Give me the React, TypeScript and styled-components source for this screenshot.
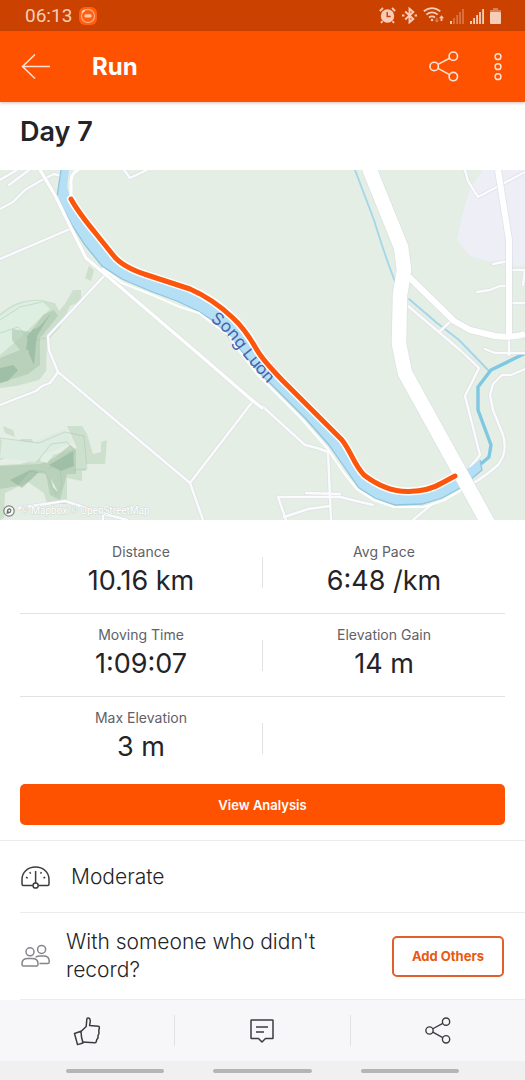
import React from "react";
import styled, { createGlobalStyle } from "styled-components";

const GlobalStyle = createGlobalStyle`
  * { box-sizing: border-box; }
  body { margin: 0; background: #fff; }
  button { font: inherit; color: inherit; background: none; border: 0; padding: 0; cursor: pointer; }
  svg { display: block; flex: none; }
  h1, h2, p, dl, dd { margin: 0; }
`;

const Page = styled.div`
  min-height: 100vh;
  display: flex;
  flex-direction: column;
  background: #fff;
  color: #242428;
  font-family: Inter, "Noto Sans", sans-serif;
`;

const StatusBar = styled.div`
  height: 31px;
  padding: 0 24px 0 25px;
  display: flex;
  align-items: center;
  gap: 7px;
  background: #cb4200;
  color: #f6cdb9;
`;

const Clock = styled.time`
  font: 400 19px/22px Roboto, sans-serif;
`;

const StatusIcons = styled.div`
  margin-left: auto;
  display: flex;
  align-items: center;
  gap: 6px;
`;

const Header = styled.header`
  position: relative;
  height: 71px;
  padding: 0 20px;
  display: flex;
  align-items: center;
  background: #fe5200;
  color: #ffe3d6;
  box-shadow: 0 1px 3px rgba(120, 60, 30, 0.35);
`;

const HeaderTitle = styled.h1`
  flex: 1;
  margin-left: 40px;
  color: #fff;
  font-size: 24px;
  line-height: 30px;
  font-weight: 700;
`;

const IconButton = styled.button<{ $width: number }>`
  display: flex;
  align-items: center;
  justify-content: center;
  width: ${(p) => p.$width}px;
  height: 40px;
`;

const HeaderActions = styled.div`
  display: flex;
  gap: 31px;
`;

const ActivityTitle = styled.h2`
  height: 68px;
  padding: 14px 20px;
  font-size: 27px;
  line-height: 32px;
  font-weight: 600;
`;

const MapImage = styled.svg`
  width: 100%;
  height: 350px;
  background: #e4eee4;
`;

const Stats = styled.section`
  padding: 11px 20px 0;
`;

const StatRow = styled.dl`
  display: grid;
  grid-template-columns: 1fr 1px 1fr;
  align-items: center;
  border-bottom: 1px solid #e2e2e4;
  &:last-child { border-bottom: 0; }
`;

const Stat = styled.div`
  padding: 12px 0 16px;
  display: flex;
  flex-direction: column;
  align-items: center;
  gap: 4px;
`;

const StatLabel = styled.dt`
  color: #616167;
  font-size: 14px;
  line-height: 18px;
`;

const StatValue = styled.dd`
  font-size: 27px;
  line-height: 32px;
  font-weight: 400;
`;

const Separator = styled.span`
  width: 1px;
  height: 31px;
  background: #e2e2e5;
`;

const Analysis = styled.div`
  padding: 5px 20px 15px;
  border-bottom: 1px solid #ebebed;
`;

const PrimaryButton = styled.button`
  width: 100%;
  height: 41px;
  border-radius: 5px;
  background: #fe5200;
  color: #fff;
  font-size: 13px;
  font-weight: 600;
`;

const DetailRow = styled.div<{ $height: number; $gap: number }>`
  margin-left: 20px;
  padding-right: 21px;
  min-height: ${(p) => p.$height}px;
  display: flex;
  align-items: center;
  gap: ${(p) => p.$gap}px;
  border-bottom: 1px solid #ebebed;
`;

const DetailText = styled.p`
  flex: 1;
  font-size: 21px;
  line-height: 28px;
  font-weight: 300;
  color: #242428;
`;

const OutlineButton = styled.button`
  width: 112px;
  height: 41px;
  border: 2px solid #e0602c;
  border-radius: 5px;
  color: #e8590f;
  font-size: 13px;
  font-weight: 700;
`;

const TabBar = styled.nav`
  margin-top: auto;
  height: 61px;
  display: grid;
  grid-template-columns: 1fr 1px 1fr 1px 1fr;
  align-items: center;
  justify-items: center;
  background: #f7f7fa;
  color: #3c3c40;
`;

const SystemNav = styled.div`
  height: 19px;
  padding: 0 66px;
  display: flex;
  align-items: center;
  gap: 49px;
  background: #f0f0f0;
`;

const NavHandle = styled.span`
  flex: 1;
  height: 4px;
  border-radius: 2px;
  background: #b5b5b5;
`;

function ShareIcon({ width, height }: { width: number; height: number }) {
  return (
    <svg width={width} height={height} viewBox="0 0 30 32" fill="none" stroke="currentColor" strokeWidth="1.6">
      <circle cx="5.2" cy="15.4" r="4.2" />
      <circle cx="24.3" cy="5.2" r="4.2" />
      <circle cx="24.3" cy="25.6" r="4.2" />
      <path d="M9 13.4 20.5 7.2M9 17.4l11.5 6.2" />
    </svg>
  );
}

function StatusGlyphs() {
  return (
    <StatusIcons>
      <svg width="17" height="17" viewBox="0 0 17 17" fill="currentColor">
        <circle cx="8.5" cy="9" r="6.7" />
        <path d="M.8 4 4 1M16.2 4 13 1M3.5 14.2 2 16M13.5 14.2 15 16" fill="none" stroke="currentColor" strokeWidth="1.8" />
        <path d="M8.2 5v4.5h3.5" fill="none" stroke="#cb4200" strokeWidth="1.4" />
      </svg>
      <svg width="15" height="17" viewBox="0 0 15 17" fill="none" stroke="currentColor" strokeWidth="1.9">
        <path d="M3.2 4.5 11.3 12 7.5 15.3V1.7L11.3 5 3.2 12.5" />
        <path d="M0 8.5h2.4M12.6 8.5H15" />
      </svg>
      <svg width="21" height="17" viewBox="0 0 21 17" fill="none" stroke="currentColor" strokeWidth="1.8">
        <path d="M.8 4.3Q9 -2 17.3 4.3M3.4 7.6Q9 3.2 14.7 7.6M6 10.5Q9 8.3 12 10.5" />
        <circle cx="9" cy="13" r="1.2" fill="currentColor" stroke="none" />
        <path d="M18.5 8.2 21 11.3h-1.6V14h-1.8v-2.7H16z" fill="currentColor" stroke="none" />
        <path d="M13.8 15.8 11.5 13H13v-2h1.6v2H16z" fill="currentColor" stroke="none" opacity=".4" />
      </svg>
      <svg width="14" height="16" viewBox="0 0 14 16" fill="currentColor">
        <path d="M0 13h2v3H0z" />
        <path d="M3.2 10h1.7v6H3.2zM6.3 7H8v9H6.3zM9.2 4h1.7v12H9.2zM12.2 1h1.7v15h-1.7z" opacity=".38" />
      </svg>
      <svg width="14" height="16" viewBox="0 0 14 16" fill="currentColor">
        <path d="M0 13h2v3H0zM3.2 10h1.8v6H3.2zM6.2 7H8v9H6.2zM9.1 4h1.8v12H9.1zM12.2 1H14v15h-1.8z" />
      </svg>
      <svg width="11" height="16" viewBox="0 0 11 16" fill="currentColor">
        <path d="M3 0h5v2h3v2H0V2h3z" opacity=".45" />
        <rect y="4" width="11" height="12" rx="1" />
      </svg>
    </StatusIcons>
  );
}

const roads =
  "M0 39 13 32 25 20 40 11 54 4 62 6M0 10 17 0M9 15 29 0M71 29V14Q70 4 78 0M124 0 130 8 147 0M0 89 70 59M105 105 48 166 49 180 58 202 50 213 42 216 36 221 0 235M58 202 190 313 203 350M253 231 190 313M262 236 305 275 317 278 328 282 331 350M278 327H340L373 335M278 327 286 350M306 323 340 324M284 347 308 339 330 336M413 350 431 335M19 338 65 331 105 344 127 350M103 343V350M465 0 468 11 478 27 525 2M493 94 508 91M510 100H525L523 115M477 122 490 120 500 116H508M511 133H525M452 150 439 162M408 136 460 180 479 198 465 226 480 285 470 297M485 179 495 183 525 183M509 165V185M525 199 511 205 502 205 493 214 490 225 493 240 503 265Q508 283 498 295 480 311 462 319";
const riverBank =
  "M61 0 57 27 72 55 85 75 102 96 122 109 150 121 177 131 198 141 215 152 237 176 262 205 306 249 329 275 345 298 359 318 375 328 395 335 422 334 442 328 462 317 482 300 480 290";
const river =
  riverBank +
  " 469 298 455 305Q442 310 429 318 395 328 375 313L362 303 352 287 342 270 312 240 262 188 257 180 245 162 233 148 213 133 190 119 147 105 125 96 113 85 97 65 80 45 71 29 67 17 69 0Z";
const highway = "M369 -2 401 77 404 100 400 125 399 174 405 203 489 355";
const route =
  "M71 29Q78 42 97 65L113 85Q122 97 147 105L190 119Q213 129 233 148 245 159 257 180 262 189 282 210L342 270C352 283 354 295 364 305Q386 322 409 321.500 429 321 442 313L455 306";

function RouteMap() {
  return (
    <MapImage viewBox="0 0 525 350" preserveAspectRatio="xMidYMid slice" role="img" aria-label="Route map">
      <path d="M483 0 470 18 464 38 457 70 470 86 488 91 508 96H525V0Z" fill="#edeef6" />

      <path
        d="M89 96 94 100 91 111 85 108ZM73 120H81V131L70 136 60 157 47 171 46 201 39 210 16 216 0 218V144Q18 128 42 130L55 133 59 141 65 134Z M3 256 13 260 15 267 5 263ZM0 268 13 281V286L0 290ZM20 269H32L37 285H28ZM67 256H82L87 264 93 284 101 282V272L107 270 105 294H86V301H82V311L67 308V334H47L44 323 28 312 5 323 4 348 0 350V295L20 294 39 289 60 283 77 278Z"
        fill="#cddfcd"
      />
      <path d="M0 146Q20 129 42 131L50 139 31 157 22 166 0 185Z" fill="#dcefe1" />
      <path d="M2 269 33 272 65 259 73 272 55 280 35 292 0 288Z" fill="#dcece0" />
      <path
        d="M54 140 58 146 40 168V195L28 204 0 213V188L20 180 12 170V159L31 162 43 145ZM0 296 40 294 54 288 70 275 76 280V304H67L60 330 50 325 46 304 30 302 17 316 0 319Z"
        fill="#aecab1"
        opacity=".65"
      />
      <path
        d="M51 143 37 166 35 180H26L28 165 41 155ZM0 198 13 195 18 200 8 211 0 213ZM49 295 73 281 74 296 61 301ZM10 310 30 300 39 302 22 318ZM34 158 37 162 34 195 29 184 27 166ZM52 296 70 286 66 296Z"
        fill="#88ae93"
        opacity=".5"
      />
      <path d="M42 285 51 281 53 286 47 293 40 291ZM51 309 58 322 53 317Z" fill="#dff0e4" />
      <path
        d="M0 150 20 137 42 132M0 163 18 157 31 171 46 168M0 268 39 273 65 262 84 266 87 299 73 300M37 292 51 274 67 272 75 281 70 293 48 298M32 300 45 302 56 325 62 316 60 300"
        fill="none"
        stroke="#9ebdaa"
        strokeWidth=".8"
        opacity=".5"
      />

      <g fill="none" strokeLinecap="round" strokeLinejoin="round">
        <path d="M355 0 374 50Q386 89 396 114M409 129 437 153 459 170 489 201" stroke="#a1d6eb" strokeWidth="1.8" />
        <path d="M528 182 491 200 478 217V240L491 275 489 287 482 293" stroke="#7fc8e3" strokeWidth="3.4" />
        <path d={roads} stroke="#d9dbe3" strokeWidth="4" opacity=".65" />
        <path d={roads} stroke="#fbfbfe" strokeWidth="2.4" />
      </g>

      <path d={river} fill="#b5dff5" />
      <path d={riverBank} fill="none" stroke="#8dc5df" strokeWidth="1.3" />
      <g fill="none" stroke="#fff" strokeLinecap="round" strokeLinejoin="round">
        <path d="M39 -2 56 27 71 58 86 88 105 104 194 180 253 231 262 238" stroke="#d9dbe3" strokeWidth="4.6" opacity=".6" />
        <path d="M39 -2 56 27 71 58 86 88 105 104 194 180 253 231 262 238" strokeWidth="3.2" />
        <path d="M103 99 122 113 150 124 180 137 199 143 229 166 237 178 258 205 300 247 327 278 344 303 357 319 374 330 394 337 424 337 444 330 463 319" strokeWidth="2.2" />
        <path d="M71 29V14Q70 4 78 0" strokeWidth="3" />
      </g>
      <g fill="none" strokeLinejoin="round">
        <g stroke="#d9dde3" opacity=".7">
          <path d="M409 107 454 151 470 160 495 166Q512 168 525 164" strokeWidth="7.5" />
          <path d="M498 0 509 70V165" strokeWidth="7.5" />
          <path d={highway} strokeWidth="16" />
        </g>
        <g stroke="#fff">
          <path d="M409 107 454 151 470 160 495 166Q512 168 525 164" strokeWidth="6" />
          <path d="M498 0 509 70V165" strokeWidth="6" />
          <path d={highway} strokeWidth="14.5" />
        </g>
      </g>

      <path id="river-label" d="M210 151Q223 158 236 176T270 216" fill="none" />
      <text fill="#4862ad" fontFamily="Inter, sans-serif" fontSize="17">
        <textPath href="#river-label">Song Luon</textPath>
      </text>

      <g fill="none" strokeLinejoin="round" strokeLinecap="round">
        <path d={route} stroke="#fff" strokeWidth="8" />
        <path d={route} stroke="#fb560b" strokeWidth="5" />
      </g>

      <circle cx="9" cy="341" r="5.2" fill="#fff" fillOpacity=".7" stroke="#7c827f" strokeWidth="1.2" />
      <path d="m6.5 344 .5-4Q9 337 11.3 339.5 12 343 9 343.3Z" fill="#68706c" />
      <circle cx="9.3" cy="340.7" r="1" fill="#fff" />
      <text x="21" y="344" fill="#fff" fontFamily="Roboto, sans-serif" fontSize="10" stroke="#cfd8d1" strokeWidth="1" paintOrder="stroke">
        © Mapbox © OpenStreetMap
      </text>
    </MapImage>
  );
}

type StatData = { label: string; value: string };

const rows: StatData[][] = [
  [
    { label: "Distance", value: "10.16 km" },
    { label: "Avg Pace", value: "6:48 /km" },
  ],
  [
    { label: "Moving Time", value: "1:09:07" },
    { label: "Elevation Gain", value: "14 m" },
  ],
  [{ label: "Max Elevation", value: "3 m" }],
];

function StatCell({ label, value }: StatData) {
  return (
    <Stat>
      <StatLabel>{label}</StatLabel>
      <StatValue>{value}</StatValue>
    </Stat>
  );
}

export default function App() {
  return (
    <>
      <GlobalStyle />
      <Page>
        <StatusBar>
          <Clock>06:13</Clock>
          <svg width="18" height="18" viewBox="0 0 18 18" fill="none">
            <rect width="18" height="18" rx="6" fill="#fe5f10" />
            <circle cx="9" cy="9" r="6.6" stroke="#ffad7d" strokeWidth="1.2" />
            <path d="M3.2 5.6Q4 4 5.6 3.3" stroke="#ffe7da" strokeWidth="1.6" />
            <rect x="5.5" y="7.3" width="7" height="3.2" rx="1.2" fill="#ffc9a8" />
          </svg>
          <StatusGlyphs />
        </StatusBar>

        <Header>
          <IconButton $width={32} aria-label="Back">
            <svg width="30" height="26" viewBox="0 0 30 26" fill="none" stroke="currentColor" strokeWidth="1.5">
              <path d="M14 .5 1.500 12.500 14 24.500M1.500 12.500H29" />
            </svg>
          </IconButton>
          <HeaderTitle>Run</HeaderTitle>
          <HeaderActions>
            <IconButton $width={30} aria-label="Share">
              <ShareIcon width={30} height={32} />
            </IconButton>
            <IconButton $width={15} aria-label="More options">
              <svg width="8" height="28" viewBox="0 0 8 28" fill="none" stroke="currentColor" strokeWidth="1.5">
                <circle cx="4" cy="3.700" r="2.9" />
                <circle cx="4" cy="13.700" r="2.9" />
                <circle cx="4" cy="23.700" r="2.9" />
              </svg>
            </IconButton>
          </HeaderActions>
        </Header>

        <main>
          <ActivityTitle>Day 7</ActivityTitle>
          <RouteMap />
          <Stats>
            {rows.map(([left, right]) => (
              <StatRow key={left.label}>
                <StatCell {...left} />
                <Separator />
                {right && <StatCell {...right} />}
              </StatRow>
            ))}
          </Stats>
          <Analysis>
            <PrimaryButton>View Analysis</PrimaryButton>
          </Analysis>
          <DetailRow $height={72} $gap={21}>
            <svg width="30" height="24" viewBox="0 0 30 24" fill="none" stroke="#3c3c40" strokeWidth="1.5">
              <path d="M12.8 20.5H3.3Q2 20.5 2 19V14.5C2 7 8 2 15.5 2S29 7 29 14.5V19Q29 20.5 27.7 20.5H18.5" />
              <path d="M15.6 6V18" />
              <circle cx="15.6" cy="20.5" r="2.6" />
              <path d="m6 12.2 1.7.8M9.7 7.2l1 1.5M21.5 7.2l-1 1.5M25.2 12.2 23.5 13" />
            </svg>
            <DetailText>Moderate</DetailText>
          </DetailRow>
          <DetailRow $height={87} $gap={16}>
            <svg width="30" height="24" viewBox="0 0 30 24" fill="none" stroke="#85858c" strokeWidth="1.5">
              <circle cx="10" cy="7.8" r="4" />
              <circle cx="21.6" cy="5.4" r="4" />
              <path d="M2 19.5Q2 14.5 8 14.5H12Q18 14.5 18 19.5V20.5Q18 22 16.5 22H3.5Q2 22 2 20.5Z" />
              <path d="M15.5 13.2Q17.5 12 20 12H23.5Q29.2 12 29.2 17V18Q29.2 19.6 27.7 19.6H19.5" />
            </svg>
            <DetailText>With someone who didn't record?</DetailText>
            <OutlineButton>Add Others</OutlineButton>
          </DetailRow>
        </main>

        <TabBar aria-label="Activity actions">
          <IconButton $width={60} aria-label="Give kudos">
            <svg width="28" height="30" viewBox="0 0 28 30" fill="none" stroke="currentColor" strokeWidth="1.5" strokeLinejoin="round">
              <path d="M8 15.5 13.2 10.5 13.8 3.5Q14 1.5 15.7 2 17.3 2.5 17.3 5L16.6 9.5 25.2 10.3Q26.8 10.6 26.3 12L25.8 14.5 26 17.5 25 19.5V22L23.8 23.5 23.2 25.8Q23 26.8 21.5 26.8L9.5 26" />
              <path d="M1.5 17.5 8 15.3 8.5 21 10 27 4.5 28.6Z" />
            </svg>
          </IconButton>
          <Separator />
          <IconButton $width={60} aria-label="Comments">
            <svg width="24" height="24" viewBox="0 0 24 24" fill="none" stroke="currentColor" strokeWidth="1.5" strokeLinejoin="round">
              <path d="M1.5 1H22.5Q23 1 23 1.5V19Q23 19.5 22.5 19.5H15.5L12 23 8.5 19.5H1.5Q1 19.5 1 19V1.5Q1 1 1.5 1ZM6 8H18M6 13H14" />
            </svg>
          </IconButton>
          <Separator />
          <IconButton $width={60} aria-label="Share activity">
            <ShareIcon width={26} height={28} />
          </IconButton>
        </TabBar>
        <SystemNav>
          <NavHandle />
          <NavHandle />
          <NavHandle />
        </SystemNav>
      </Page>
    </>
  );
}
